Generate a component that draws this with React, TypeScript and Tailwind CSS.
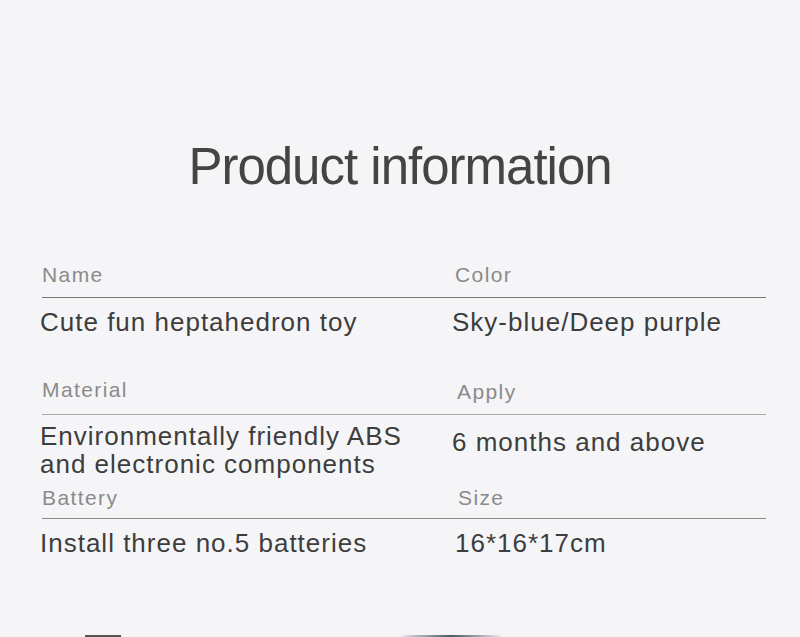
export default function App() {
  const labelCls =
    "text-[21px] leading-[21px] tracking-[1.4px] text-[#8a8a8a]";
  const valueCls =
    "text-[26px] leading-[28px] tracking-[1px] text-[#3d3d3d]";

  return (
    <div
      className="w-[800px] h-[637px] overflow-hidden bg-[#f5f5f7]"
      style={{ fontFamily: '"Liberation Sans", Arial, sans-serif' }}
    >
      <h1 className="pt-[141px] text-center text-[51px] leading-[51px] tracking-[-1px] text-[#444444]">
        Product information
      </h1>

      <div className="ml-[42px] w-[724px] mt-[72px]">
        {/* row 1 */}
        <div className="grid grid-cols-[413px_1fr] pb-[12px] border-b border-[#7a7a7a]">
          <div className={labelCls}>Name</div>
          <div className={labelCls}>Color</div>
        </div>
        <div className="grid grid-cols-[412px_1fr] mt-[10px] -ml-[2px]">
          <div className={valueCls}>Cute fun heptahedron toy</div>
          <div className={valueCls}>Sky-blue/Deep purple</div>
        </div>

        {/* row 2 */}
        <div className="grid grid-cols-[415px_1fr] mt-[43px] pb-[12px] border-b border-[#ababab]">
          <div className={labelCls}>Material</div>
          <div className={labelCls + " pt-[2px]"}>Apply</div>
        </div>
        <div className="grid grid-cols-[412px_1fr] mt-[7px] -ml-[2px]">
          <div className={valueCls}>
            Environmentally friendly ABS
            <br />
            and electronic components
          </div>
          <div className={valueCls + " pt-[6px]"}>6 months and above</div>
        </div>

        {/* row 3 */}
        <div className="grid grid-cols-[416px_1fr] mt-[9px] pb-[10px] border-b border-[#8a8a8a]">
          <div className={labelCls}>Battery</div>
          <div className={labelCls}>Size</div>
        </div>
        <div className="grid grid-cols-[415px_1fr] mt-[10px] -ml-[2px]">
          <div className={valueCls}>Install three no.5 batteries</div>
          <div className={valueCls}>16*16*17cm</div>
        </div>
      </div>

      {/* edge of the picture below */}
      <div className="mt-[78px] flex items-start">
        <div className="ml-[85px] w-[36px] h-[2px] bg-[#555]" />
        <div className="ml-[280px] w-[100px] h-[3px] rounded-t-full bg-gradient-to-r from-[#e8ecef] via-[#4a5a66] to-[#e8ecef]" />
      </div>
    </div>
  );
}
